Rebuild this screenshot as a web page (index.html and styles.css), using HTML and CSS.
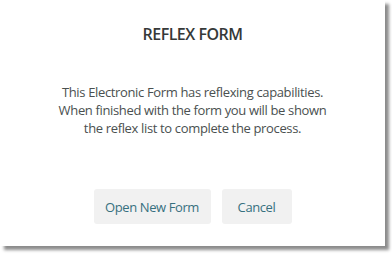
FILE: index.html
```html
<!DOCTYPE html>
<html>
<head>
<meta charset="utf-8">
<link rel="stylesheet" href="styles.css">
</head>
<body>
<div class="dialog">
  <h1 class="title">REFLEX FORM</h1>
  <p class="message">This Electronic Form has reflexing capabilities.<br>When finished with the form you will be shown<br>the reflex list to complete the process.</p>
  <div class="actions">
    <button class="btn btn-wide">Open New Form</button>
    <button class="btn btn-cancel">Cancel</button>
  </div>
</div>
</body>
</html>
```
FILE: styles.css
```css
html, body {
  margin: 0;
  padding: 0;
  background: #ffffff;
}
body {
  width: 392px;
  height: 255px;
  overflow: hidden;
  font-family: "Open Sans", "Noto Sans", sans-serif;
}
.dialog {
  width: 385px;
  height: 246px;
  background: #ffffff;
  box-shadow: 4px 4px 3px rgba(0, 0, 0, 0.45);
  display: flex;
  flex-direction: column;
  align-items: center;
  box-sizing: border-box;
  padding-top: 23px;
}
.title {
  margin: 0;
  font-size: 16px;
  line-height: 22px;
  font-weight: 600;
  letter-spacing: -0.5px;
  color: #363939;
}
.message {
  margin: 38px 0 0;
  font-size: 13px;
  line-height: 18px;
  letter-spacing: -0.35px;
  color: #4a5050;
  text-align: center;
}
.actions {
  margin-top: 52px;
  display: flex;
  gap: 11px;
}
.btn {
  height: 35px;
  border: none;
  border-radius: 3px;
  background: #f1f1f1;
  color: #37707f;
  font-family: "Open Sans", "Noto Sans", sans-serif;
  font-size: 13px;
  letter-spacing: -0.4px;
  padding: 0;
}
.btn-wide {
  width: 117px;
}
.btn-cancel {
  width: 70px;
}
```
